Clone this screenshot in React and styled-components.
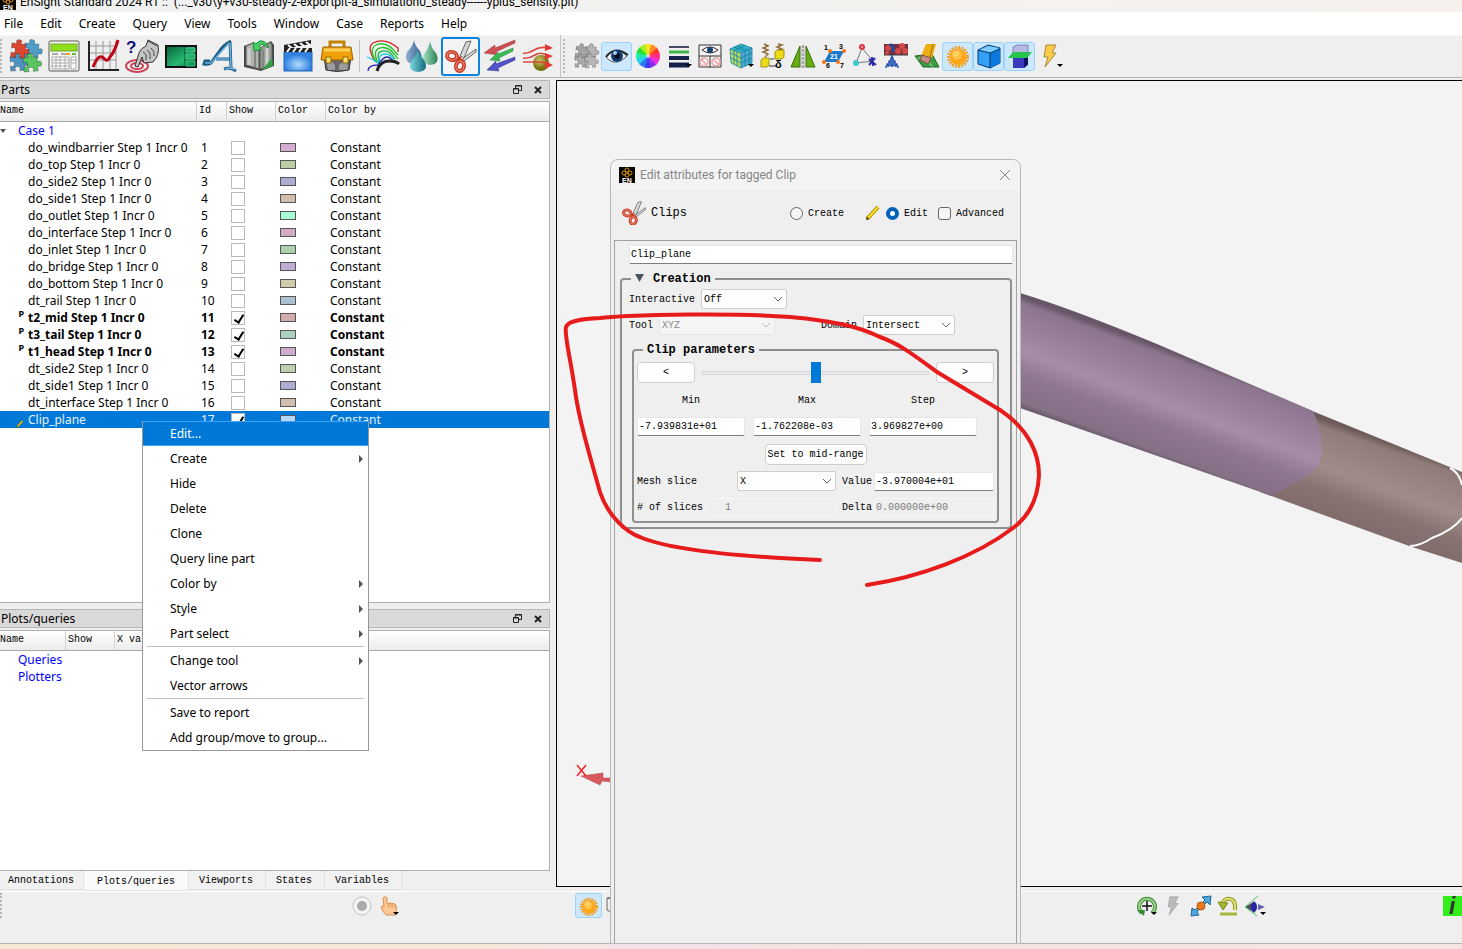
import React from 'react'
import styled, { createGlobalStyle, css } from 'styled-components'

const sans = '"Noto Sans", "Open Sans", sans-serif'
const caption = 'Roboto, "Noto Sans", sans-serif'
const mono = '"Liberation Mono", "DejaVu Sans Mono", monospace'

const GlobalStyle = createGlobalStyle`
  * {
    box-sizing: border-box;
  }
  body {
    margin: 0;
    background: #efefef;
    color: #000;
    font-family: ${sans};
    font-size: 12px;
    overflow: hidden;
  }
  button, input, select {
    font: inherit;
    color: inherit;
    margin: 0;
  }
`

const Page = styled.div`
  position: relative;
  display: flex;
  flex-direction: column;
  height: 100vh;
  overflow: hidden;
`

const TitleBar = styled.header`
  display: flex;
  align-items: flex-end;
  gap: 4px;
  height: 12px;
  flex: none;
  padding-bottom: 2px;
  overflow: hidden;
  white-space: pre;
  font: 12px/16px ${caption};
  background: linear-gradient(90deg, #f0f2f2, #f6f1ed);
`

const MenuBar = styled.nav`
  display: flex;
  gap: 17px;
  flex: none;
  height: 23px;
  padding-left: 4px;
  background: #fff;
`

const MenuButton = styled.button`
  border: 0;
  padding: 0;
  background: none;
  font-size: 12px;
`

const ToolBar = styled.div`
  display: flex;
  align-items: center;
  flex: none;
  height: 43px;
  padding-bottom: 1px;
  border-top: 1px solid #f6f6f6;
  border-bottom: 1px solid #b4b4b4;
  background: #efefef;
`

const Grip = styled.div`
  width: ${(p) => p.$width}px;
  height: ${(p) => p.$height}px;
  border-left: 2px dotted #b4b4b4;
`

const ToolGroup = styled.div`
  display: flex;
  align-items: center;
`

const ToolButton = styled.button`
  display: grid;
  place-items: center;
  width: ${(p) => p.$width || 39}px;
  height: ${(p) => p.$height || 39}px;
  padding: 0;
  border: ${(p) => (p.$framed ? '2px solid #0a84e0' : '1px solid transparent')};
  border-radius: 3px;
  background: none;
  ${(p) => p.$active && css`
    border-color: #99d1ff;
    background: #cce8ff;
  `}
  ${(p) => p.$framed && css`
    background: #f4f4f4;
  `}
  svg {
    display: block;
    overflow: visible;
  }
`

const Divider = styled.div`
  width: 1px;
  height: ${(p) => p.$height}px;
  margin: 0 ${(p) => p.$gap}px;
  background: #c4c4c4;
`

const Main = styled.main`
  display: flex;
  flex: 1;
  min-height: 0;
  padding-top: 2px;
`

const Sidebar = styled.aside`
  display: flex;
  flex-direction: column;
  flex: 0 0 550px;
`

const Panel = styled.section`
  display: flex;
  flex-direction: column;
  flex: ${(p) => p.$grow} 1 0;
  min-height: 0;
`

const PanelTitle = styled.h2`
  display: flex;
  align-items: center;
  flex: none;
  height: 19px;
  margin: 0 0 2px;
  padding: 0 6px 0 1px;
  border: 1px solid #b6b6b6;
  border-left: 0;
  background: #d9d9d9;
  font-size: 12px;
  font-weight: normal;
  span {
    flex: 1;
  }
`

const PanelButton = styled.button`
  display: grid;
  place-items: center;
  width: 10px;
  height: 16px;
  margin-left: 11px;
  padding: 0;
  border: 0;
  background: none;
`

const PanelBody = styled.div`
  flex: 1;
  min-height: 0;
  overflow: hidden;
  border: 1px solid #b0b0b0;
  border-left: 0;
  background: #fff;
`

const Table = styled.table`
  width: 100%;
  table-layout: fixed;
  border-collapse: separate;
  border-spacing: 0;
  white-space: nowrap;
  th {
    height: 20px;
    padding: 0 0 3px 2px;
    border-right: 1px solid #cfcfcf;
    border-bottom: 1px solid #a8a8a8;
    background: linear-gradient(#fff, #ececec);
    font: 10px ${mono};
    text-align: left;
    overflow: hidden;
  }
  th:first-child {
    padding-left: 0;
  }
  th:last-child {
    border-right: 0;
  }
  td {
    height: 17px;
    padding: 0 0 0 4px;
    line-height: 17px;
  }
`

const PartRow = styled.tr`
  font-weight: ${(p) => (p.$bold ? 'bold' : 'normal')};
  ${(p) => p.$selected && css`
    background: #0078d7;
    color: #e4f1fc;
  `}
`

const NameCell = styled.div`
  display: flex;
  align-items: center;
  height: 17px;
  margin-left: -4px;
`

const Marker = styled.span`
  display: flex;
  justify-content: flex-end;
  width: 28px;
  padding-right: 4px;
  font-size: 9px;
  line-height: 10px;
  align-self: ${(p) => (p.$low ? 'flex-end' : 'flex-start')};
`

const Expander = styled.span`
  width: 18px;
  svg {
    display: block;
  }
`

const LinkText = styled.a`
  color: #0000ff;
  text-decoration: none;
`

const Indent = styled.div`
  padding-left: 14px;
`

const Check = styled.input`
  appearance: none;
  display: block;
  position: relative;
  width: 14px;
  height: 14px;
  border: 1px solid #b9b9b9;
  background: #fff;
  &:checked::after {
    content: '';
    position: absolute;
    left: 4px;
    top: 1px;
    width: 4px;
    height: 8px;
    border: solid #000;
    border-width: 0 2px 2px 0;
    transform: rotate(32deg);
  }
`

const Swatch = styled.div`
  width: 16px;
  height: 9px;
  border: 1px solid #555;
  background: ${(p) => p.$color};
`

const Tabs = styled.div`
  display: flex;
  flex: none;
  height: 20px;
`

const Tab = styled.button`
  height: ${(p) => (p.$active ? 20 : 19)}px;
  padding: ${(p) => (p.$active ? '2px 13px 0 13px' : '0 12px 0 10px')};
  border: 0;
  border-right: 1px solid #e2e2e2;
  border-bottom: 1px solid #e2e2e2;
  background: ${(p) => (p.$active ? '#fafafa' : '#f1f1f1')};
  font: 10px ${mono};
  &:first-child {
    padding: 0 9px 0 8px;
  }
`

const Viewport = styled.section`
  flex: 1;
  min-width: 0;
  margin: 0 0 4px 6px;
  border: 1px solid #000;
  border-right: 0;
  background: #f3f3f3;
  svg {
    display: block;
    width: 100%;
    height: 100%;
  }
`

const StatusBar = styled.footer`
  display: flex;
  align-items: flex-start;
  flex: none;
  height: 53px;
  padding-top: 1px;
  border-top: 1px solid #fff;
  border-bottom: 1px solid #b4b4b4;
`

const Spacer = styled.div`
  flex: ${(p) => (p.$width ? `0 0 ${p.$width}px` : 1)};
`

const Desktop = styled.div`
  flex: none;
  height: 5px;
  background: linear-gradient(90deg, #f6e8d2, #f8e6d6 30%, #f3e3e8 45%, #f6e2df 60%, #f7e4e2);
`

/* context menu */

const Menu = styled.ul`
  position: absolute;
  left: 142px;
  top: 421px;
  width: 227px;
  margin: 0;
  padding: 0;
  border: 1px solid #979797;
  border-top: 0;
  background: #fff;
  list-style: none;
`

const MenuItem = styled.button`
  display: flex;
  align-items: center;
  justify-content: space-between;
  width: 100%;
  height: 25px;
  padding: 0 5px 0 27px;
  border: 1px solid ${(p) => (p.$active ? '#3ea5f3' : 'transparent')};
  border-width: 1px 0;
  background: ${(p) => (p.$active ? '#0078d7' : 'none')};
  color: ${(p) => (p.$active ? '#fff' : '#000')};
  text-align: left;
`

const MenuLine = styled.li`
  height: 2px;
  margin: 0 4px;
  border-top: 1px solid #c0c0c0;
`

/* dialog */

const Dialog = styled.section`
  position: absolute;
  left: 610px;
  top: 159px;
  bottom: 5px;
  width: 411px;
  display: flex;
  flex-direction: column;
  padding: 0 3px;
  border: 1px solid #b9b9b9;
  border-radius: 8px 8px 0 0;
  background: #efefef;
  font: 10px ${mono};
`

const DialogTitle = styled.div`
  display: flex;
  align-items: center;
  gap: 5px;
  height: 30px;
  margin: 0 -3px;
  padding: 0 10px 0 8px;
  border-radius: 8px 8px 0 0;
  background: #f3f3f3;
  color: #858585;
  font: 12px ${caption};
  span {
    flex: 1;
  }
`

const CloseButton = styled.button`
  padding: 0;
  border: 0;
  background: none;
  svg {
    display: block;
  }
`

const ModeRow = styled.div`
  display: flex;
  align-items: center;
  height: 46px;
  padding: 0 13px 0 8px;
  strong {
    flex: 1;
    padding-left: 5px;
    font-size: 12px;
    font-weight: normal;
  }
`

const Choice = styled.label`
  display: flex;
  align-items: center;
  gap: 5px;
  margin-left: ${(p) => p.$gap || 0}px;
  input {
    appearance: none;
    width: 13px;
    height: 13px;
    border: 1px solid #666;
    border-radius: ${(p) => (p.$square ? 3 : 7)}px;
    background: #f6f6f6;
  }
  input:checked {
    border: 4px solid #0063b9;
    background: #fff;
  }
`

const DialogBody = styled.div`
  flex: 1;
  margin-top: 4px;
  padding: 4px 3px 0 5px;
  border: 1px solid #a0a0a0;
  border-bottom: 0;
`

const TextBox = styled.input`
  flex: ${(p) => (p.$width ? `0 0 ${p.$width}px` : 1)};
  width: ${(p) => (p.$width ? `${p.$width}px` : 'auto')};
  min-width: 0;
  height: 19px;
  padding: 0 1px;
  border: 1px solid #e6e6e6;
  border-bottom-color: #7e7e7e;
  border-radius: 2px;
  background: #fff;
  font: 10px ${mono};
  &:disabled {
    border-color: #f8f8f8;
    background: none;
    color: #7b7b7b;
  }
`

const NameRow = styled.div`
  display: flex;
  margin: 0 0 8px 9px;
`

const Group = styled.fieldset`
  min-width: 0;
  margin: ${(p) => (p.$inner ? '5px 2px 0 3px' : '0 1px 0 0')};
  padding: ${(p) => (p.$inner ? '5px 3px 1px 3px' : '0 9px 4px 7px')};
  border: 2px solid #8f8f8f;
  border-radius: 4px;
`

const Legend = styled.legend`
  margin-left: ${(p) => (p.$inner ? 6 : 2)}px;
  padding: 0 4px;
  font-size: 12px;
  font-weight: bold;
  line-height: 14px;
  svg {
    margin-right: 9px;
  }
`

const FieldRow = styled.div`
  display: flex;
  align-items: center;
  height: 26px;
`

const FieldLabel = styled.label`
  flex: none;
  width: ${(p) => p.$width}px;
  margin-left: ${(p) => p.$start || 0}px;
`

const SelectBox = styled.div`
  display: grid;
  align-items: center;
  flex: none;
  width: ${(p) => p.$width}px;
  height: 20px;
  select, svg {
    grid-area: 1 / 1;
  }
  svg {
    justify-self: end;
    margin-right: 4px;
    pointer-events: none;
  }
  select {
    appearance: none;
    width: 100%;
    height: 20px;
    padding: 0 2px;
    border: 1px solid #cdcdcd;
    border-radius: 2px;
    background: #fdfdfd;
    font: 10px ${mono};
  }
  select:disabled {
    border-color: #e6e6e6;
    background: #f5f5f5;
    color: #8a8a8a;
    opacity: 1;
  }
`

const PushButton = styled.button`
  width: ${(p) => p.$width}px;
  height: 21px;
  padding: 0;
  border: 1px solid #cfcfcf;
  border-radius: 4px;
  background: #fdfdfd;
  font: 10px ${mono};
`

const SliderRow = styled.div`
  display: flex;
  align-items: center;
  gap: 7px;
`

const Slider = styled.input`
  appearance: none;
  flex: 1;
  min-width: 0;
  height: 21px;
  background: none;
  &::-webkit-slider-runnable-track {
    height: 4px;
    border: 1px solid #d6d9d9;
    background: #e7eaea;
  }
  &::-webkit-slider-thumb {
    appearance: none;
    width: 10px;
    height: 21px;
    margin-top: -10px;
    background: #0078d7;
  }
`

const RangeGrid = styled.div`
  display: grid;
  grid-template-columns: repeat(3, 108px);
  column-gap: 8px;
  margin-top: 11px;
  label {
    display: flex;
    flex-direction: column;
    gap: 10px;
    line-height: 13px;
    text-align: center;
  }
  input {
    flex: none;
  }
`

const CenterRow = styled.div`
  display: flex;
  justify-content: center;
  margin: 8px 0 3px;
`

const Annotation = styled.svg`
  position: absolute;
  left: 556px;
  top: 306px;
  pointer-events: none;
`

/* icons */

const Svg = ({ size = 32, children, box = 32 }) => (
  <svg width={size} height={size} viewBox={`0 0 ${box} ${box}`} aria-hidden="true">{children}</svg>
)

const piece = 'M0 0H5Q3-4 7-4T9 0H14V5Q18 3 18 7T14 9V14H9Q11 10 7 10T5 14H0V9Q4 11 4 7T0 5Z'

const Puzzle = ({ colors, size }) => (
  <Svg size={size}>
    <g stroke="#0004" strokeWidth="1">
      <path d={piece} fill={colors[0]} transform="translate(16 3) rotate(5)" />
      <path d={piece} fill={colors[1]} transform="translate(1 17) rotate(-3)" />
      <path d={piece} fill={colors[2]} transform="translate(3 3) rotate(6)" />
      <path d={piece} fill={colors[3]} transform="translate(14 18) rotate(-5)" />
    </g>
  </Svg>
)

const Calculator = () => (
  <Svg>
    <rect x="1" y="1" width="30" height="30" rx="2" fill="#f4f4f2" stroke="#8c8c88" strokeWidth="1.5" />
    <rect x="3" y="4" width="26" height="7" fill="#8fe01c" stroke="#6fa52a" />
    <path d="M4 14h6M13 14h5" stroke="#aaa" strokeWidth="2" />
    <path d="M18 14h4" stroke="#f29a1c" strokeWidth="2" />
    <path d="M24 14h4" stroke="#64c040" strokeWidth="2" />
    <path d="M4 17h17v12H4zM4 20h17M4 23h17M4 26h17M8 17v12M12 17v12M17 17v12M23 17h5v12h-5zM23 20h5M23 23h5" fill="#fff" stroke="#a9a9a9" />
  </Svg>
)

const Graph = () => (
  <Svg>
    <path d="M9 1v29M16 1v29M23 1v29M29 1v29M2 6h28M2 13h28M2 20h28" stroke="#999" strokeWidth="1" />
    <path d="M1 1h2v28h29v2H1z" fill="#222" />
    <path d="M6 27C10 18 12 16 15 17S19 24 23 17Q28 11 31 0" fill="none" stroke="#c00418" strokeWidth="3" />
  </Svg>
)

const QueryHand = () => (
  <Svg>
    <g fill="none" stroke="#cb4455" strokeWidth="2">
      <ellipse cx="11" cy="26" rx="11" ry="6" />
      <ellipse cx="11" cy="26" rx="6" ry="3" />
    </g>
    <path d="M9 26L13 13Q15 8 20 6L22 0 32 5Q34 15 27 22L18 23 16 17 12 27Z" fill="#c4c4c4" stroke="#333" />
    <path d="M17 12Q21 13 20 20M21 10Q25 12 24 19M25 8Q29 11 28 16M22 1l9 5" fill="none" stroke="#444" />
    <text x="0" y="13" fontFamily="Liberation Sans" fontSize="17" fontWeight="bold" fill="#12127f">?</text>
  </Svg>
)

const Layout = () => (
  <Svg>
    <defs>
      <linearGradient id="lay" x1="0" y1="0" x2="1" y2="1">
        <stop offset="0" stopColor="#075f35" />
        <stop offset="0.6" stopColor="#27b873" />
        <stop offset="1" stopColor="#0c8046" />
      </linearGradient>
    </defs>
    <rect x="1" y="6" width="30" height="21" fill="url(#lay)" stroke="#111" strokeWidth="2" />
    <path d="M20 7v19M20 13h10M20 20h10" stroke="#084c2b" />
    <path d="M21 8h9v4h-9zM21 14h9v5h-9zM21 21h9v5h-9z" fill="none" stroke="#3fc987" />
  </Svg>
)

const LetterA = () => (
  <Svg>
    <path d="M27 1Q19 5 15 12L7 23Q5 25 0 24L1 21H6M26 2L27 28M12 19H26M20 29Q26 27 32 31" fill="none" stroke="#1d5c84" strokeWidth="3" />
    <path d="M25 3L7 23H1M26 3L27 28M12 19H25M21 29Q27 27 31 30" fill="none" stroke="#68b0dc" strokeWidth="1.5" />
  </Svg>
)

const Book = () => (
  <Svg>
    <path d="M1 6L9 3 17 8 28 1 31 5V26L18 31 1 27Z" fill="#3f4a42" />
    <path d="M3 6L10 3 16 8V29L3 25Z" fill="#aeb3ae" stroke="#5a5a5a" />
    <path d="M17 8L27 2 29 5V25L17 29Z" fill="#989d98" stroke="#5a5a5a" />
    <path d="M6 8v17M24 8v18" stroke="#cfcfcf" strokeWidth="3" />
    <path d="M12 10v17M20 10v18" stroke="#808580" strokeWidth="2" />
    <path d="M29 18L19 30 30 26Z" fill="#35a045" />
    <path d="M25 5Q18-3 13 4L10 2 11 11 19 9 16 6Q20 2 25 8Z" fill="#43ce62" stroke="#248c3b" />
  </Svg>
)

const Clapper = () => (
  <Svg>
    <defs>
      <radialGradient id="clap" cy="0.65">
        <stop offset="0" stopColor="#b1dcff" />
        <stop offset="1" stopColor="#3282e0" />
      </radialGradient>
    </defs>
    <path d="M2 5L29 0V4L2 9Z" fill="#222" />
    <path d="M6 5l4 3M12 4l4 3M18 3l4 3M24 2l4 3" stroke="#fff" strokeWidth="2" />
    <rect x="2" y="12" width="28" height="19" fill="url(#clap)" stroke="#1c66ba" />
    <rect x="2" y="8" width="28" height="4" fill="#222" />
    <path d="M8 8l-3 4M14 8l-3 4M20 8l-3 4M26 8l-3 4" stroke="#fff" strokeWidth="2" />
  </Svg>
)

const Toolbox = () => (
  <Svg>
    <path d="M9 7V2h14v5" fill="none" stroke="#c28300" strokeWidth="3" />
    <path d="M3 17H30L28 30Q16 33 5 30Z" fill="#69696b" stroke="#333" />
    <path d="M6 24Q10 19 14 25V30H7ZM18 25Q24 19 27 25L26 30H18Z" fill="#9c9ca0" />
    <path d="M2 7H30L32 20H0Z" fill="#efa10c" stroke="#9a6500" />
    <path d="M3 10h26" stroke="#ffd15b" strokeWidth="3" />
    <rect x="5" y="17" width="5" height="6" fill="#ffe26a" stroke="#98690a" />
    <rect x="22" y="17" width="5" height="6" fill="#ffe26a" stroke="#98690a" />
  </Svg>
)

const Contours = () => (
  <Svg>
    <g fill="none" strokeWidth="1.3">
      <path d="M9 22Q-1 8 6 3 18-3 31 8V12" stroke="#d91d26" />
      <path d="M10 23Q1 9 9 5 20 0 31 15" stroke="#19c92c" />
      <path d="M11 23Q5 10 13 8 22 5 31 19" stroke="#22bd20" />
      <path d="M13 22Q8 12 16 11 23 10 28 19" stroke="#18b44b" />
      <path d="M0 17Q8 20 12 24Q11 14 18 14 24 14 27 20" stroke="#20c9dc" />
      <path d="M1 31Q1 25 11 25Q16 17 20 17 23 17 26 21" stroke="#2424bb" />
    </g>
    <path d="M10 31Q13 21 22 21 29 21 32 24" fill="none" stroke="#222" strokeWidth="3" />
  </Svg>
)

const Drops = () => (
  <Svg>
    <defs>
      <linearGradient id="dropA"><stop stopColor="#8eb0d2" /><stop offset="1" stopColor="#35618f" /></linearGradient>
      <linearGradient id="dropB"><stop stopColor="#a5e3c2" /><stop offset="1" stopColor="#2a7f55" /></linearGradient>
      <linearGradient id="dropC"><stop stopColor="#7cd7df" /><stop offset="1" stopColor="#116b7d" /></linearGradient>
    </defs>
    <path d="M8 0Q9 6 14 11 19 23 8 24-3 23 1 12 7 6 8 0Z" fill="url(#dropA)" />
    <path d="M24 1Q25 8 30 13 35 24 24 25 14 23 18 14 23 8 24 1Z" fill="url(#dropB)" />
    <path d="M12 9Q13 15 18 20 24 31 12 32 0 31 6 20 11 15 12 9Z" fill="url(#dropC)" />
  </Svg>
)

const Scissors = ({ size }) => (
  <Svg size={size}>
    <path d="M15 16L21 2 26 1 19 18ZM17 19L31 9V12L19 21Z" fill="#d6d9d9" stroke="#666" />
    <g fill="none" stroke="#c83d25" strokeWidth="4">
      <ellipse cx="7" cy="16" rx="5" ry="4" transform="rotate(15 7 16)" />
      <ellipse cx="15" cy="26" rx="4" ry="5" transform="rotate(15 15 26)" />
      <path d="M11 18L17 19M15 21L17 18" />
    </g>
    <g fill="none" stroke="#f09886" strokeWidth="1">
      <ellipse cx="7" cy="16" rx="5" ry="4" transform="rotate(15 7 16)" />
      <ellipse cx="15" cy="26" rx="4" ry="5" transform="rotate(15 15 26)" />
    </g>
    <circle cx="17" cy="18" r="1" fill="#ddd" />
  </Svg>
)

const Vectors = () => (
  <Svg>
    <path d="M0 13L11 5V8L31 0V3L12 12 14 15Z" fill="#ce4e52" stroke="#96393d" strokeWidth="0.5" />
    <path d="M6 20L14 12V14L29 8V11L15 18 16 21Z" fill="#39b951" stroke="#218538" strokeWidth="0.5" />
    <path d="M3 30L12 21V24L31 17V20L14 28 15 31Z" fill="#5252cc" stroke="#292985" strokeWidth="0.5" />
  </Svg>
)

const Streams = () => (
  <Svg>
    <defs>
      <radialGradient id="ball" cx="0.4" cy="0.35">
        <stop offset="0" stopColor="#c9c56a" />
        <stop offset="1" stopColor="#77730c" />
      </radialGradient>
    </defs>
    <circle cx="18" cy="23" r="8" fill="url(#ball)" />
    <g fill="none" stroke="#d84a43" strokeWidth="1.6">
      <path d="M0 13Q5 14 11 10T25 8" />
      <path d="M0 18Q6 19 12 15T25 16" />
      <path d="M0 22Q8 22 15 22T25 25" />
    </g>
    <path d="M22 4L30 8 22 11ZM22 13L30 16 22 20ZM22 21L30 25 22 29Z" fill="#e23732" />
  </Svg>
)

const Eye = () => (
  <Svg size={24} box={24}>
    <path d="M1 13Q11 1 22 12 12 22 4 16Z" fill="#f4f4f4" stroke="#555" />
    <path d="M1 13Q10 1 23 11" fill="none" stroke="#25272b" strokeWidth="2" />
    <circle cx="12" cy="12" r="6" fill="#123f78" />
    <circle cx="12" cy="12" r="3" fill="#04101f" />
    <circle cx="10" cy="9" r="2" fill="#a6cdf0" />
  </Svg>
)

const wheel = ['#ff3b30', '#ff8a1f', '#ffe01f', '#a8f01f', '#2be02b', '#22e8a8', '#23d3f0', '#2b7bf3', '#3c3cf0', '#8f2bf0', '#ec2be4', '#ff2b83']
const ColorWheel = () => (
  <Svg size={24} box={24}>
    {wheel.map((c, i) => (
      <path key={c} d="M12 12L8.600 0.500A12 12 0 0 1 15.400 0.500Z" fill={c} transform={`rotate(${60 - i * 30} 12 12)`} />
    ))}
    <circle cx="12" cy="12" r="2" fill="#fff8" />
  </Svg>
)

const DropMark = () => <path d="M19 20H25L22 23Z" fill="#000" />

const LineWidths = () => (
  <Svg size={24} box={24}>
    <path d="M2 3h20" stroke="#444a68" strokeWidth="2" />
    <path d="M2 8h20" stroke="#42b649" strokeWidth="3" />
    <path d="M2 14h20" stroke="#18244d" strokeWidth="4" />
    <path d="M2 21h20" stroke="#13204b" strokeWidth="5" />
    <DropMark />
  </Svg>
)

const EyeGrid = () => (
  <Svg size={24} box={24}>
    <path d="M1 1h22v22H1zM1 12h22M12 12v11" fill="#f3f3f3" stroke="#333" />
    <path d="M4 6Q12 0 20 6 12 12 4 6Z" fill="#fff" stroke="#333" />
    <circle cx="12" cy="6" r="3" fill="#164078" />
    <g fill="none" stroke="#eda2a2" strokeWidth="1.5">
      <circle cx="6" cy="18" r="4" />
      <circle cx="18" cy="18" r="4" />
      <path d="M3 15l6 6M15 15l6 6" />
    </g>
  </Svg>
)

const MeshCube = () => (
  <Svg size={24} box={24}>
    <path d="M1 5L12 0 23 4 12 9Z" fill="#36b3c8" />
    <path d="M1 5L12 9V24L2 19Z" fill="#b9d86a" />
    <path d="M12 9L23 4V19L12 24Z" fill="#4fa9d4" />
    <path d="M1 5L12 9V24L2 19ZM12 9L23 4V19L12 24M1 5L12 0 23 4M5 6v14M8 8v14M2 9l10 5 11-5M2 14l10 5 11-5M16 7v15M20 6v15M5 3l11 4M8 2l11 4M5 7l11-6" fill="none" stroke="#11809c" strokeWidth="0.8" />
    <DropMark />
  </Svg>
)

const Springs = () => (
  <Svg size={24} box={24}>
    <path d="M4 0L8 2 3 4 8 6 3 8 8 10 5 13M18 0L22 1 17 3 22 5 18 6" fill="none" stroke="#8b6533" strokeWidth="1.4" />
    <path d="M1 16L3 14H9V21L7 23H1ZM15 8L17 6H24V13L22 15H15Z" fill="#eddb18" stroke="#a09318" />
    <path d="M9 22H16M10 15H14" stroke="#333" />
    <text x="15" y="24" fontFamily="Liberation Sans" fontSize="11" fontWeight="bold">δ</text>
  </Svg>
)

const Mirror = () => (
  <Svg size={24} box={24}>
    <path d="M9 2V23H0ZM15 2V23H24Z" fill="#68ae12" stroke="#366d0b" />
    <path d="M12 1V24" stroke="#666" strokeDasharray="3 1" />
    <path d="M10 2V24M14 2V24" stroke="#aaa" />
  </Svg>
)

const Nodes = () => (
  <Svg size={24} box={24}>
    <path d="M8 7H22L16 18H2Z" fill="#1c77ce" />
    <g fill="#f17314"><circle cx="8" cy="7" r="2" /><circle cx="22" cy="7" r="2" /><circle cx="2" cy="18" r="2" /><circle cx="16" cy="18" r="2" /></g>
    <g fontFamily="Liberation Sans" fontWeight="bold" fontSize="7">
      <text x="2" y="6">1</text><text x="17" y="5">3</text><text x="4" y="24">6</text><text x="18" y="24">7</text>
      <text x="8" y="15" fill="#fff">21</text>
    </g>
  </Svg>
)

const TriangleTool = () => (
  <Svg size={24} box={24}>
    <path d="M9 4L3 19 20 17Z" fill="none" stroke="#777" />
    <circle cx="9" cy="3" r="3" fill="#db3642" />
    <circle cx="9" cy="3" r="1" fill="#f7b5b5" />
    <circle cx="3" cy="19" r="3" fill="#38cbcb" />
    <path d="M16 15l7 6M22 14l-6 7M19 13l1 9" stroke="#292ca5" strokeWidth="2" />
  </Svg>
)

const Particles = () => (
  <Svg size={24} box={24}>
    <rect width="24" height="11" fill="#783039" />
    <g fill="#d44949"><circle cx="4" cy="4" r="3" /><circle cx="3" cy="9" r="2" /><circle cx="14" cy="7" r="3" /><circle cx="21" cy="7" r="3" /><circle cx="18" cy="2" r="3" /></g>
    <path d="M6 0l3 3v5" fill="none" stroke="#234ba5" strokeWidth="3" />
    <path d="M0 11h24" stroke="#444" />
    <path d="M8 11V16" stroke="#345ba8" strokeWidth="2" />
    <g fill="#305ab5"><circle cx="8" cy="15" r="2" /><circle cx="6" cy="18" r="2" /><circle cx="10" cy="18" r="2" /><circle cx="4" cy="21" r="2" /><circle cx="8" cy="21" r="2" /><circle cx="12" cy="21" r="2" /><circle cx="2" cy="23" r="1" /><circle cx="14" cy="23" r="1" /></g>
  </Svg>
)

const Eraser = () => (
  <Svg size={24} box={24}>
    <path d="M0 12L17 10 24 23H8Z" fill="#3d9c40" stroke="#1d6a23" />
    <path d="M4 13l13 9M10 12l8 11M2 15l12-5" stroke="#7ece7c" />
    <path d="M11 0H21L17 14 6 12Z" fill="#edae13" />
    <path d="M18 0L15 14" stroke="#a56c02" />
    <path d="M7 11L16 14 13 20 5 16Z" fill="#c98b88" stroke="#774d44" />
  </Svg>
)

const Sun = ({ size = 24 }) => (
  <Svg size={size} box={24}>
    <circle cx="12" cy="13" r="9" fill="none" stroke="#efa22b" strokeWidth="4" strokeDasharray="2 1" />
    <circle cx="12" cy="13" r="8" fill="#ffa51a" />
    <circle cx="11" cy="11" r="5" fill="#ffbf45" />
    <circle cx="10" cy="10" r="3" fill="#ffd264" />
  </Svg>
)

const BlueCube = () => (
  <Svg size={24} box={24}>
    <path d="M1 6L11 1 23 4V19L13 24 1 20Z" fill="#34a0f7" stroke="#053a69" />
    <path d="M2 6L11 2 22 4 13 9Z" fill="#7fcdff" />
    <path d="M13 9L23 5V19L13 24Z" fill="#0b79e0" />
    <path d="M1 6L13 9 23 5M13 9V24" fill="none" stroke="#05365d" />
  </Svg>
)

const ClipBox = () => (
  <Svg size={24} box={24}>
    <path d="M5 3L9 1H20V12H5Z" fill="#b5b9e4" stroke="#7c83bd" />
    <path d="M5 12H20V21L16 24H5Z" fill="#3a3abf" />
    <path d="M16 12V24L20 20V12Z" fill="#101065" />
    <path d="M5 8H24L19 14H0Z" fill="#28c44e" />
  </Svg>
)

const Bolt = ({ fill = '#f8cb48', stroke = '#a9863c', size = 24, menu }) => (
  <Svg size={size} box={24}>
    <path d="M7 1H17L13 9H17L6 23 9 13H5Z" fill={fill} stroke={stroke} />
    {menu && <path d="M18 20H24L21 23Z" />}
  </Svg>
)

const Pencil = ({ size = 16 }) => (
  <Svg size={size} box={16}>
    <path d="M2 14L13 2" stroke="#a98700" strokeWidth="4" />
    <path d="M3 13L13 2" stroke="#ffe321" strokeWidth="2" />
    <path d="M1 15L4 14 2 12Z" fill="#342b1d" />
  </Svg>
)

const Logo = () => (
  <Svg size={16} box={16}>
    <rect width="16" height="16" fill="#080600" />
    <g fill="none" stroke="#d89414"><circle cx="8" cy="3" r="2" /><circle cx="5" cy="6" r="2" /><circle cx="11" cy="6" r="2" /><circle cx="8" cy="8" r="2" /></g>
    <text x="3" y="16" fontFamily="Liberation Sans" fontSize="7" fontWeight="bold" fill="#fff">EN</text>
  </Svg>
)

const Chevron = ({ color = '#666' }) => (
  <svg width="10" height="6" viewBox="0 0 10 6" aria-hidden="true">
    <path d="M1 1L5 5 9 1" fill="none" stroke={color} />
  </svg>
)

const Restore = () => (
  <svg width="9" height="9" viewBox="0 0 9 9" aria-hidden="true">
    <path d="M2.500 3V.5h6v5H6M.5 3.500h5v5h-5zM0 4h6M2 1h7" fill="none" stroke="#222" />
  </svg>
)

const Cross = () => (
  <svg width="8" height="8" viewBox="0 0 8 8" aria-hidden="true">
    <path d="M1 1l6 6M7 1L1 7" stroke="#222" strokeWidth="2" />
  </svg>
)

const RadioDot = () => (
  <Svg size={20} box={20}>
    <circle cx="10" cy="10" r="9" fill="#f4f4f4" stroke="#c4c4c4" />
    <circle cx="10" cy="10" r="5" fill="#ababab" />
  </Svg>
)

const Pointer = () => (
  <Svg size={20} box={20}>
    <path d="M3 2Q5-1 7 2V8L10 7 15 8Q18 12 15 19H6Q2 15 1 11Q2 9 4 11Z" fill="#fbc795" stroke="#dc8f4d" />
    <path d="M9 8v4M12 8v4M15 9v3" stroke="#dc8f4d" />
    <path d="M13 16h6l-3 3z" fill="#000" />
  </Svg>
)

const CubeOutline = () => (
  <Svg size={20} box={20}>
    <path d="M1 2L9 4V18L1 14ZM1 2L8 1 17 3V16L9 18M9 4L17 3" fill="none" stroke="#666" />
  </Svg>
)

const RotateAdd = () => (
  <Svg size={20} box={20}>
    <path d="M5 17A8 8 0 1 1 15 17" fill="none" stroke="#428f3c" strokeWidth="4" />
    <path d="M5 17A8 8 0 1 1 15 17" fill="none" stroke="#9cd289" strokeWidth="2" />
    <path d="M0 14H8L7 20Z" fill="#378a36" />
    <path d="M10 5v10M5 10h10" stroke="#111" strokeWidth="1.5" />
    <path d="M14 16h6l-3 3z" />
  </Svg>
)

const ZoomArrow = () => (
  <Svg size={20} box={20}>
    <path d="M20 0L19 9 16 6 6 16 8 19 0 20 1 12 4 14 14 4 11 1Z" fill="#4ca8df" stroke="#236791" />
    <circle cx="10" cy="10" r="4" fill="#ee791e" stroke="#b75110" />
  </Svg>
)

const Undo = () => (
  <Svg size={20} box={20}>
    <path d="M4 9Q5 2 12 3 18 4 17 14" fill="none" stroke="#949929" strokeWidth="4" />
    <path d="M4 9Q5 2 12 3 18 4 17 14" fill="none" stroke="#e1e36d" strokeWidth="2" />
    <path d="M0 6L10 7 5 14Z" fill="#a6b72f" stroke="#7a8719" />
    <path d="M2 18h17" stroke="#a7b63b" strokeWidth="3" />
  </Svg>
)

const ViewCone = () => (
  <Svg size={20} box={20}>
    <path d="M0 11L10 5V17Z" fill="#555" />
    <path d="M0 11L13 0M0 11L12 20" stroke="#48c668" />
    <ellipse cx="9" cy="11" rx="3" ry="5" fill="#2525aa" />
    <path d="M13 8L20 11 13 14Z" fill="#6363a7" />
    <path d="M15 16h6l-3 3z" />
  </Svg>
)

const Info = () => (
  <svg width="20" height="20" viewBox="0 0 20 20" aria-hidden="true">
    <rect width="20" height="20" fill="#33ee1b" />
    <text x="6" y="18" fontFamily="Liberation Sans" fontSize="23" fontStyle="italic" fontWeight="bold" fill="#333">i</text>
  </svg>
)

const Scene = () => (
  <svg viewBox="557 81 905 805" preserveAspectRatio="xMinYMin slice" aria-label="Model view">
    <defs>
      <linearGradient id="mauve" gradientUnits="userSpaceOnUse" x1="1170" y1="351" x2="1134" y2="449">
        <stop offset="0" stopColor="#675668" />
        <stop offset="0.06" stopColor="#8c758e" />
        <stop offset="0.5" stopColor="#a78da8" />
        <stop offset="0.7" stopColor="#8e7790" />
        <stop offset="0.95" stopColor="#857086" />
        <stop offset="1" stopColor="#695a6c" />
      </linearGradient>
      <linearGradient id="tan" gradientUnits="userSpaceOnUse" x1="1390" y1="443" x2="1360" y2="528">
        <stop offset="0" stopColor="#6b5a57" />
        <stop offset="0.08" stopColor="#8f7b77" />
        <stop offset="0.5" stopColor="#a28c8a" />
        <stop offset="0.75" stopColor="#877371" />
        <stop offset="1" stopColor="#806c6a" />
      </linearGradient>
    </defs>
    <path d="M1300 406L1462 472V563L1412 547 1260 492Z" fill="url(#tan)" />
    <path d="M1020 293Q1070 308 1157 344L1313 411Q1322 430 1322 450 1322 468 1302 479L1272 496 1020 408Z" fill="url(#mauve)" />
    <path d="M1450 468Q1459 472 1462 485M1462 518Q1453 530 1432 538 1420 546 1410 546" fill="none" stroke="#fff" strokeWidth="2" />
    <path d="M581 776L603 773V778H612V782L602 781 600 785Z" fill="#d85a5f" stroke="#a83e42" strokeWidth="0.5" />
    <path d="M577 765L586 776M586 765L577 776" stroke="#f02222" strokeWidth="1.5" />
  </svg>
)

const tools = [
  ['Parts', <Puzzle colors={['#4d9fca', '#4c93c4', '#dc4631', '#58c55d']} />],
  ['Calculator', <Calculator />],
  ['Plots', <Graph />],
  ['Query', <QueryHand />],
  ['Viewports', <Layout />],
  ['Annotations', <LetterA />],
  ['Load', <Book />],
  ['Animation', <Clapper />],
  ['Toolbox', <Toolbox />],
]

const partTools = [
  ['Contours', <Contours />],
  ['Isosurfaces', <Drops />],
  ['Clips', <Scissors />, true],
  ['Vectors', <Vectors />],
  ['Traces', <Streams />],
]

const displayTools = [
  ['Part', <Puzzle size={24} colors={['#b2b2b2', '#aaa', '#a4a4a4', '#b6b6b6']} />],
  ['Visible', <Eye />, true],
  ['Color', <ColorWheel />],
  ['Line width', <LineWidths />],
  ['Visibility per viewport', <EyeGrid />],
  ['Element', <MeshCube />],
  ['Displacement', <Springs />],
  ['Symmetry', <Mirror />],
  ['Labels', <Nodes />],
  ['Node', <TriangleTool />],
  ['Particles', <Particles />],
  ['Erase', <Eraser />],
  ['Lighting', <Sun />, true],
  ['Shaded', <BlueCube />, true],
  ['Clip box', <ClipBox />, true],
  ['Fast display', <Bolt menu />],
]

const parts = [
  { name: 'do_windbarrier Step 1 Incr 0', color: '#d2aed2' },
  { name: 'do_top Step 1 Incr 0', color: '#bfcdaa' },
  { name: 'do_side2 Step 1 Incr 0', color: '#adadd1' },
  { name: 'do_side1 Step 1 Incr 0', color: '#d0bfae' },
  { name: 'do_outlet Step 1 Incr 0', color: '#adffd4' },
  { name: 'do_interface Step 1 Incr 0', color: '#d1adc1' },
  { name: 'do_inlet Step 1 Incr 0', color: '#add0ad' },
  { name: 'do_bridge Step 1 Incr 0', color: '#c0add2' },
  { name: 'do_bottom Step 1 Incr 0', color: '#cfcdad' },
  { name: 'dt_rail Step 1 Incr 0', color: '#adc0d1' },
  { name: 't2_mid Step 1 Incr 0', color: '#d1adad', shown: true, bold: true },
  { name: 't3_tail Step 1 Incr 0', color: '#add0c0', shown: true, bold: true },
  { name: 't1_head Step 1 Incr 0', color: '#d0add0', shown: true, bold: true },
  { name: 'dt_side2 Step 1 Incr 0', color: '#c0cfad' },
  { name: 'dt_side1 Step 1 Incr 0', color: '#adadd1' },
  { name: 'dt_interface Step 1 Incr 0', color: '#d0bfae' },
  { name: 'Clip_plane', color: '#b1d5f4', shown: true, selected: true },
]

const menuItems = [
  ['Edit...'],
  ['Create', true],
  ['Hide'],
  ['Delete'],
  ['Clone'],
  ['Query line part'],
  ['Color by', true],
  ['Style', true],
  ['Part select', true],
  null,
  ['Change tool', true],
  ['Vector arrows'],
  null,
  ['Save to report'],
  ['Add group/move to group...'],
]

const PanelHeading = ({ title }) => (
  <PanelTitle>
    <span>{title}</span>
    <PanelButton aria-label={`Float ${title}`}><Restore /></PanelButton>
    <PanelButton aria-label={`Close ${title}`}><Cross /></PanelButton>
  </PanelTitle>
)

const Select = ({ id, value, width, disabled }) => (
  <SelectBox $width={width}>
    <select id={id} defaultValue={value} disabled={disabled}>
      <option>{value}</option>
    </select>
    <Chevron color={disabled ? '#bbb' : '#666'} />
  </SelectBox>
)

const PartsPanel = () => (
  <Panel $grow={523}>
    <PanelHeading title="Parts" />
    <PanelBody>
      <Table>
        <colgroup>
          <col width="197" />
          <col width="30" />
          <col width="49" />
          <col width="50" />
          <col />
        </colgroup>
        <thead>
          <tr><th>Name</th><th>Id</th><th>Show</th><th>Color</th><th>Color by</th></tr>
        </thead>
        <tbody>
          <tr>
            <td colSpan="5">
              <NameCell>
                <Expander><svg width="6" height="4"><path d="M0 0H6L3 4Z" fill="#555" /></svg></Expander>
                <LinkText href="#case">Case 1</LinkText>
              </NameCell>
            </td>
          </tr>
          {parts.map((part, i) => (
            <PartRow key={part.name} $bold={part.bold} $selected={part.selected}>
              <td>
                <NameCell>
                  <Marker $low={part.selected}>{part.bold ? 'P' : part.selected && <Pencil size={8} />}</Marker>
                  {part.name}
                </NameCell>
              </td>
              <td>{i + 1}</td>
              <td><Check type="checkbox" aria-label={`Show ${part.name}`} defaultChecked={part.shown} /></td>
              <td><Swatch $color={part.color} /></td>
              <td>Constant</td>
            </PartRow>
          ))}
        </tbody>
      </Table>
    </PanelBody>
  </Panel>
)

const PlotsPanel = () => (
  <Panel $grow={262}>
    <PanelHeading title="Plots/queries" />
    <PanelBody>
      <Table>
        <colgroup>
          <col width="66" />
          <col width="49" />
          <col />
        </colgroup>
        <thead>
          <tr><th>Name</th><th>Show</th><th>X variable</th></tr>
        </thead>
        <tbody>
          <tr><td colSpan="3"><Indent><LinkText href="#queries">Queries</LinkText></Indent></td></tr>
          <tr><td colSpan="3"><Indent><LinkText href="#plotters">Plotters</LinkText></Indent></td></tr>
        </tbody>
      </Table>
    </PanelBody>
  </Panel>
)

const ContextMenu = () => (
  <Menu>
    {menuItems.map((item, i) => item ? (
      <li key={item[0]}>
        <MenuItem $active={i === 0}>
          {item[0]}
          {item[1] && <svg width="4" height="8"><path d="M0 0L4 4 0 8Z" fill="#555" /></svg>}
        </MenuItem>
      </li>
    ) : <MenuLine key={i} />)}
  </Menu>
)

const ClipDialog = () => (
  <Dialog role="dialog" aria-label="Edit attributes for tagged Clip">
    <DialogTitle>
      <Logo />
      <span>Edit attributes for tagged Clip</span>
      <CloseButton aria-label="Close">
        <svg width="10" height="10"><path d="M0 0L10 10M10 0L0 10" stroke="#888" /></svg>
      </CloseButton>
    </DialogTitle>
    <ModeRow>
      <Scissors size={24} />
      <strong>Clips</strong>
      <Choice><input type="radio" name="mode" />Create</Choice>
      <Spacer $width={21} />
      <Pencil />
      <Choice $gap={5}><input type="radio" name="mode" defaultChecked />Edit</Choice>
      <Choice $gap={10} $square><input type="checkbox" />Advanced</Choice>
    </ModeRow>
    <DialogBody>
      <NameRow>
        <TextBox aria-label="Part name" defaultValue="Clip_plane" />
      </NameRow>
      <Group>
        <Legend>
          <svg width="9" height="8"><path d="M0 0H9L4.500 8Z" fill="#4c5560" /></svg>
          Creation
        </Legend>
        <FieldRow>
          <FieldLabel htmlFor="interactive" $width={72}>Interactive</FieldLabel>
          <Select id="interactive" value="Off" width={86} />
        </FieldRow>
        <FieldRow>
          <FieldLabel htmlFor="tool" $width={30}>Tool</FieldLabel>
          <Select id="tool" value="XYZ" width={116} disabled />
          <FieldLabel htmlFor="domain" $width={42} $start={46}>Domain</FieldLabel>
          <Select id="domain" value="Intersect" width={92} />
        </FieldRow>
        <Group $inner>
          <Legend $inner>Clip parameters</Legend>
          <SliderRow>
            <PushButton $width={58}>&lt;</PushButton>
            <Slider type="range" aria-label="Clip value" defaultValue="50" />
            <PushButton $width={58}>&gt;</PushButton>
          </SliderRow>
          <RangeGrid>
            <label>Min<TextBox defaultValue="-7.939831e+01" /></label>
            <label>Max<TextBox defaultValue="-1.762208e-03" /></label>
            <label>Step<TextBox defaultValue="3.969827e+00" /></label>
          </RangeGrid>
          <CenterRow>
            <PushButton $width={102}>Set to mid-range</PushButton>
          </CenterRow>
          <FieldRow>
            <FieldLabel htmlFor="mesh" $width={100}>Mesh slice</FieldLabel>
            <Select id="mesh" value="X" width={99} />
            <FieldLabel htmlFor="value" $width={32} $start={6}>Value</FieldLabel>
            <TextBox id="value" defaultValue="-3.970004e+01" />
          </FieldRow>
          <FieldRow>
            <FieldLabel htmlFor="slices" $width={68}># of slices</FieldLabel>
            <TextBox id="slices" $width={131} defaultValue="   1" disabled />
            <FieldLabel htmlFor="delta" $width={32} $start={6}>Delta</FieldLabel>
            <TextBox id="delta" defaultValue="0.000000e+00" disabled />
          </FieldRow>
        </Group>
      </Group>
    </DialogBody>
  </Dialog>
)

export default function App() {
  return (
    <Page>
      <GlobalStyle />
      <TitleBar>
        <Logo />
        {'EnSight Standard 2024 R1 ::  (..._v30\\y+v30-steady-z-exportplt-a_simulation0_steady------yplus_sensity.plt)'}
      </TitleBar>
      <MenuBar>
        {['File', 'Edit', 'Create', 'Query', 'View', 'Tools', 'Window', 'Case', 'Reports', 'Help'].map((name) => (
          <MenuButton key={name}>{name}</MenuButton>
        ))}
      </MenuBar>
      <ToolBar>
        <Grip $width={5} $height={34} />
        <ToolGroup>
          {tools.map(([label, icon]) => <ToolButton key={label} aria-label={label}>{icon}</ToolButton>)}
        </ToolGroup>
        <Divider $height={32} $gap={3} />
        <ToolGroup>
          {partTools.map(([label, icon, framed]) => (
            <ToolButton key={label} aria-label={label} $framed={framed}>{icon}</ToolButton>
          ))}
        </ToolGroup>
        <Divider $height={42} $gap={2} />
        <Grip $width={7} $height={34} />
        <ToolGroup>
          {displayTools.map(([label, icon, active]) => (
            <ToolButton key={label} aria-label={label} $width={31} $height={29} $active={active}>{icon}</ToolButton>
          ))}
        </ToolGroup>
      </ToolBar>
      <Main>
        <Sidebar>
          <PartsPanel />
          <Spacer $width={6} />
          <PlotsPanel />
          <Tabs>
            <Tab>Annotations</Tab>
            <Tab $active>Plots/queries</Tab>
            <Tab>Viewports</Tab>
            <Tab>States</Tab>
            <Tab>Variables</Tab>
          </Tabs>
        </Sidebar>
        <Viewport><Scene /></Viewport>
      </Main>
      <StatusBar>
        <Grip $width={348} $height={25} />
        <ToolButton $width={28} $height={25} aria-label="Record"><RadioDot /></ToolButton>
        <ToolButton $width={28} $height={25} aria-label="Pick"><Pointer /></ToolButton>
        <Spacer $width={171} />
        <ToolButton $width={27} $height={25} $active aria-label="Lighting"><Sun size={20} /></ToolButton>
        <ToolButton $width={27} $height={25} aria-label="Box"><CubeOutline /></ToolButton>
        <Spacer />
        <ToolButton $width={27} $height={25} aria-label="Rotate"><RotateAdd /></ToolButton>
        <ToolButton $width={27} $height={25} aria-label="Fast"><Bolt size={20} fill="#bbb" stroke="#aaa" /></ToolButton>
        <ToolButton $width={27} $height={25} aria-label="Zoom"><ZoomArrow /></ToolButton>
        <ToolButton $width={27} $height={25} aria-label="Undo"><Undo /></ToolButton>
        <ToolButton $width={27} $height={25} aria-label="View"><ViewCone /></ToolButton>
        <Spacer $width={174} />
        <ToolButton $width={20} $height={25} aria-label="Information"><Info /></ToolButton>
      </StatusBar>
      <Desktop />
      <ContextMenu />
      <ClipDialog />
      <Annotation width="490" height="284" viewBox="556 306 490 284" aria-hidden="true">
        <path
          d="M820 560C723 556 665 548 640 537C628 533 608 517 600 492C588 450 578 415 575 390C570 355 564 335 566 327C568 321 580 319 600 318C640 314 740 313 790 317C835 321 860 327 880 337C900 344 915 356 937 372L1000 410C1030 430 1039 455 1039 475C1038 500 1028 517 1013 528C975 557 920 577 867 585"
          fill="none" stroke="#e71b1b" strokeWidth="4" strokeLinecap="round" strokeLinejoin="round"
        />
      </Annotation>
    </Page>
  )
}
